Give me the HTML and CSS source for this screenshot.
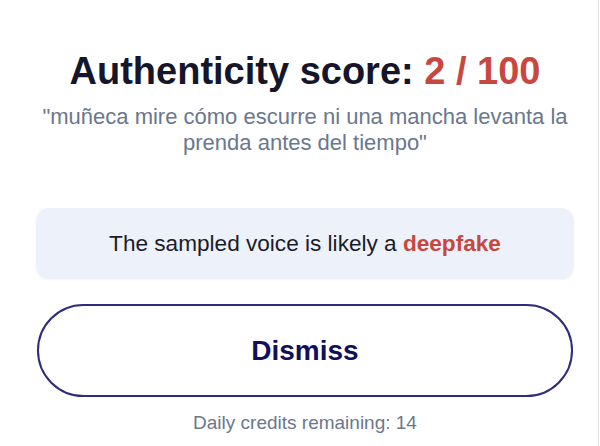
FILE: index.html
```html
<!DOCTYPE html>
<html lang="en">
<head>
<meta charset="utf-8">
<title>Authenticity score</title>
<link rel="stylesheet" href="styles.css">
</head>
<body>
<div class="page">
  <main class="result">
    <h1 class="title">Authenticity score: <span class="score">2 / 100</span></h1>
    <p class="quote">"muñeca mire cómo escurre ni una mancha levanta la prenda antes del tiempo"</p>
    <div class="verdict"><span>The sampled voice is likely a <strong class="fake">deepfake</strong></span></div>
    <button class="dismiss" type="button">Dismiss</button>
    <p class="credits">Daily credits remaining: 14</p>
  </main>
</div>
</body>
</html>
```

FILE: styles.css
```css
html, body {
  margin: 0;
  padding: 0;
  background: #ffffff;
}

body {
  font-family: "Liberation Sans", Arial, Helvetica, sans-serif;
}

.page {
  width: 598px;
  height: 446px;
  border-right: 1px solid #e3e3e6;
  overflow: hidden;
}

.result {
  margin-left: 36px;
  width: 538px;
  padding-top: 49px;
  display: flex;
  flex-direction: column;
  align-items: stretch;
  text-align: center;
}

.title {
  margin: 0;
  font-size: 38px;
  line-height: 45px;
  font-weight: 700;
  color: #15162a;
  white-space: nowrap;
}

.score {
  color: #c8483f;
}

.quote {
  margin: 10px -6px 0;
  font-size: 22px;
  line-height: 26px;
  color: #6a778e;
}

.verdict {
  margin-top: 52px;
  height: 71px;
  box-sizing: border-box;
  display: flex;
  align-items: center;
  justify-content: center;
  background: #edf1f9;
  border-radius: 13px;
  box-shadow: 0 1px 2px rgba(30, 40, 80, 0.05);
  font-size: 22.6px;
  color: #1b1c2b;
}

.fake {
  color: #c8483f;
  font-weight: 700;
}

.dismiss {
  margin: 25px 1px 0;
  height: 93px;
  box-sizing: border-box;
  border: 2px solid #2f2c7c;
  border-radius: 47px;
  background: #ffffff;
  font-family: inherit;
  font-size: 28px;
  font-weight: 700;
  color: #13105b;
  cursor: pointer;
}

.credits {
  margin: 15px 0 0;
  font-size: 19px;
  line-height: 22px;
  color: #6a778e;
}
```
